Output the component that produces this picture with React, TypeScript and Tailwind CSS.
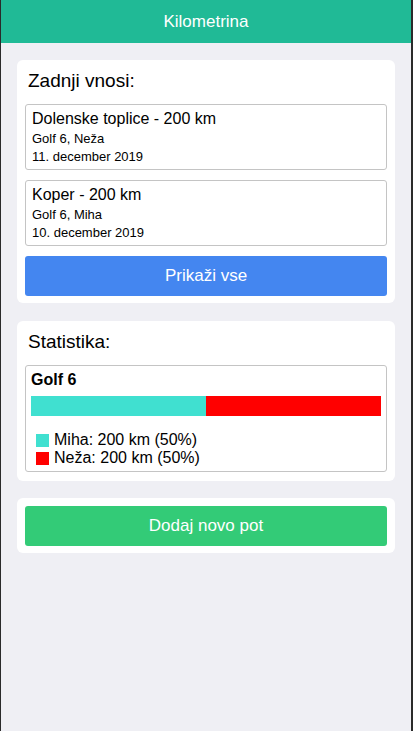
import React from 'react';

const entries = [
  { title: 'Dolenske toplice - 200 km', car: 'Golf 6, Neža', date: '11. december 2019' },
  { title: 'Koper - 200 km', car: 'Golf 6, Miha', date: '10. december 2019' },
];

export default function App() {
  return (
    <div className="h-[731px] bg-[#efeff4] border-l border-r-2 border-[#2a2a2a] font-['Liberation_Sans',Arial,sans-serif] text-black overflow-hidden">
      <div className="h-[43px] bg-[#20ba96] flex items-center justify-center">
        <h1 className="text-[17px] text-white">Kilometrina</h1>
      </div>

      <div className="px-4 pt-[17px] flex flex-col gap-[18px]">
        <div className="bg-white rounded-md px-2 pt-2 pb-[7px]">
          <h2 className="text-[19px] leading-6 px-[3px] pt-[1px] pb-[11px]">Zadnji vnosi:</h2>
          <div className="flex flex-col gap-[10px]">
            {entries.map((e) => (
              <div key={e.title} className="border border-[#c4c4c4] rounded-[3px] h-[66px] px-[6px] pt-[4px]">
                <div className="text-[16px] leading-5">{e.title}</div>
                <div className="text-[13px] leading-[19px]">{e.car}</div>
                <div className="text-[13px] leading-[18px]">{e.date}</div>
              </div>
            ))}
            <button className="h-10 bg-[#4486f0] rounded-[3px] text-white text-[17px]">Prikaži vse</button>
          </div>
        </div>

        <div className="bg-white rounded-md px-2 pt-2 pb-[9px]">
          <h2 className="text-[19px] leading-6 px-[3px] pt-[1px] pb-[11px]">Statistika:</h2>
          <div className="border border-[#c4c4c4] rounded-[3px] h-[107px] px-[5px] pt-[4px]">
            <div className="text-[16px] font-bold leading-5">Golf 6</div>
            <div className="flex h-5 mt-[6px]">
              <div className="bg-[#40e0d0]" style={{ width: '50%' }} />
              <div className="bg-[#ff0000]" style={{ width: '50%' }} />
            </div>
            <div className="mt-[15px] pl-[5px] text-[16px] leading-[18px]">
              <div className="flex items-center gap-[5px]">
                <span className="w-[13px] h-[13px] bg-[#40e0d0]" />
                Miha: 200 km (50%)
              </div>
              <div className="flex items-center gap-[5px]">
                <span className="w-[13px] h-[13px] bg-[#ff0000]" />
                Neža: 200 km (50%)
              </div>
            </div>
          </div>
        </div>

        <div className="bg-white rounded-md px-2 pt-2 pb-[7px] -mt-px">
          <button className="w-full h-10 bg-[#33cb77] rounded-[3px] text-white text-[17px]">Dodaj novo pot</button>
        </div>
      </div>
    </div>
  );
}
